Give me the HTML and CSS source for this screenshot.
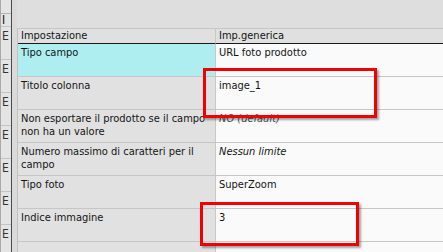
FILE: index.html
```html
<!DOCTYPE html>
<html>
<head>
<meta charset="utf-8">
<link rel="stylesheet" href="styles.css">
</head>
<body>
<div class="page">
  <div class="gutter">
    <div class="gtop"></div>
    <div class="gcell ghead">I</div>
    <div class="gcell">E</div>
    <div class="gcell">E</div>
    <div class="gcell">E</div>
    <div class="gcell">E</div>
    <div class="gcell">E</div>
    <div class="gcell">E</div>
    <div class="gcell">E</div>
  </div>
  <div class="spacer"></div>
  <div class="main">
    <div class="grid">
      <div class="hcell">Impostazione</div>
      <div class="hcell">Imp.generica</div>

      <div class="lcell sel">Tipo campo</div>
      <div class="rcell">URL foto prodotto</div>

      <div class="lcell">Titolo colonna</div>
      <div class="rcell">image_1</div>

      <div class="lcell">Non esportare il prodotto se il campo non ha un valore</div>
      <div class="rcell dim">NO (default)</div>

      <div class="lcell">Numero massimo di caratteri per il campo</div>
      <div class="rcell it">Nessun limite</div>

      <div class="lcell">Tipo foto</div>
      <div class="rcell">SuperZoom</div>

      <div class="lcell">Indice immagine</div>
      <div class="rcell">3</div>

      <div class="lcell"></div>
      <div class="rcell"></div>
    </div>
  </div>
  <div class="mark mark1"></div>
  <div class="mark mark2"></div>
</div>
</body>
</html>
```
FILE: styles.css
```css
html, body {
  margin: 0;
  padding: 0;
}
body {
  width: 443px;
  height: 252px;
  overflow: hidden;
  background: #dedede;
  font-family: "DejaVu Sans Condensed", "DejaVu Sans", sans-serif;
  font-size: 11px;
  color: #141414;
}
.page {
  position: relative;
  display: flex;
  height: 252px;
}
.gutter {
  width: 10px;
  border-left: 1px solid #a9a9a9;
  border-right: 1px solid #4a4a4a;
  background: #e4e4e4;
  display: flex;
  flex-direction: column;
  overflow: hidden;
  flex: none;
}
.gtop {
  height: 13px;
  flex: none;
  border-bottom: 1px solid #b5b5b5;
}
.gcell {
  flex: none;
  border-bottom: 1px solid #c4c4c4;
  padding-left: 1px;
  font-size: 12px;
  line-height: 14px;
  overflow: hidden;
  color: #333;
  white-space: nowrap;
  padding-top: 2px;
  box-sizing: border-box;
  height: 33px;
}
.ghead {
  height: 13px;
  padding-top: 0;
  line-height: 12px;
  color: #111;
}
.spacer {
  width: 5px;
  flex: none;
  background: #dadada;
}
.main {
  flex: 1;
  padding-top: 28px;
  overflow: hidden;
}
.grid {
  display: grid;
  grid-template-columns: 198px 1fr;
  border-left: 1px solid #c2c2c2;
  border-top: 1px solid #c6c6c6;
}
.hcell {
  background: #e0e0e0;
  height: 14px;
  line-height: 14px;
  padding: 0 3px;
  border-bottom: 1px solid #1a1a1a;
}
.hcell:first-child {
  border-right: 1px solid #c8c8c8;
}
.lcell, .rcell {
  border-bottom: 1px solid #c6c6c6;
  padding: 2px 3px 0;
  box-sizing: border-box;
  height: 33px;
  line-height: 13px;
}
.lcell {
  background: #e1e1e1;
  border-right: 1px solid #c8c8c8;
}
.rcell {
  background: #fafafa;
}
.sel {
  background: #afeef0;
}
.dim {
  font-style: italic;
  color: #505050;
}
.it {
  font-style: italic;
}
.mark {
  position: absolute;
  border: 3px solid #f00000;
  box-shadow: 2px 2px 2px rgba(0, 0, 0, 0.35);
  box-sizing: border-box;
}
.mark1 {
  left: 203px;
  top: 68px;
  width: 174px;
  height: 50px;
}
.mark2 {
  left: 200px;
  top: 202px;
  width: 159px;
  height: 44px;
}
```
